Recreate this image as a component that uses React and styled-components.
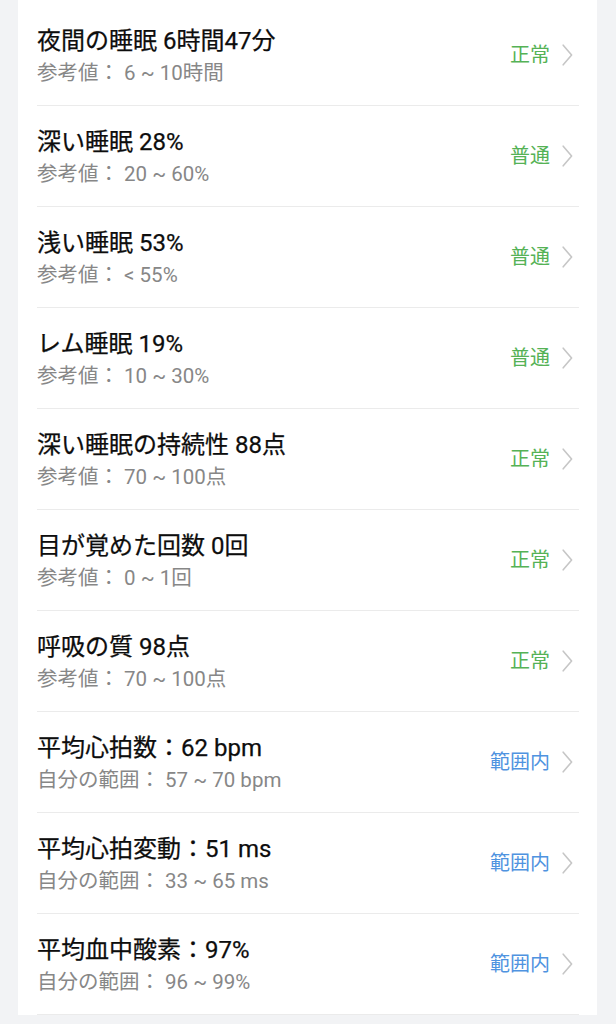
import React from 'react';
import styled, { createGlobalStyle } from 'styled-components';

const GlobalStyle = createGlobalStyle`
    html, body {
        margin: 0;
        padding: 0;
        background: #f2f3f5;
    }
    body {
        font-family: Roboto, "Noto Sans CJK JP", "Noto Sans", sans-serif;
        -webkit-font-smoothing: antialiased;
    }
`;

const Page = styled.div`
    padding: 0 19px 0 18px;
    height: 1024px;
    overflow: hidden;
`;

const Card = styled.div`
    background: #ffffff;
    padding-top: 5px;
`;

const Row = styled.div`
    display: flex;
    align-items: center;
    height: 100px;
    margin: 0 18px 0 19px;
    border-bottom: 1px solid #ebebeb;
`;

const Info = styled.div`
    flex: 1;
    display: flex;
    flex-direction: column;
    gap: 4px;
    padding-top: 1px;
`;

const Title = styled.div`
    font-size: 24px;
    line-height: 30px;
    font-weight: 400;
    color: #0d0d0d;
    white-space: pre;
    -webkit-text-stroke: 0.25px #0d0d0d;
`;

const Sub = styled.div`
    font-size: 20.5px;
    line-height: 26px;
    color: #878787;
    white-space: pre;
`;

const Status = styled.div`
    display: flex;
    align-items: center;
    gap: 12px;
    padding-right: 6px;
    font-size: 20px;
    line-height: 26px;
    color: ${(p) => (p.$tone === 'blue' ? '#4f93e0' : '#55b256')};
`;

const Chevron = () => (
    <svg width='11' height='22' viewBox='0 0 11 22'>
        <polyline
            points='1.2,1.2 9.6,11 1.2,20.8'
            fill='none'
            stroke='#c6c6c6'
            strokeWidth='1.6'
            strokeLinecap='round'
            strokeLinejoin='round'
        />
    </svg>
);

const items = [
    { title: '夜間の睡眠 6時間47分', sub: '参考値： 6 ~ 10時間', status: '正常' },
    { title: '深い睡眠 28%', sub: '参考値： 20 ~ 60%', status: '普通' },
    { title: '浅い睡眠 53%', sub: '参考値： < 55%', status: '普通' },
    { title: 'レム睡眠 19%', sub: '参考値： 10 ~ 30%', status: '普通' },
    { title: '深い睡眠の持続性 88点', sub: '参考値： 70 ~ 100点', status: '正常' },
    { title: '目が覚めた回数 0回', sub: '参考値： 0 ~ 1回', status: '正常' },
    { title: '呼吸の質 98点', sub: '参考値： 70 ~ 100点', status: '正常' },
    { title: '平均心拍数：62 bpm', sub: '自分の範囲： 57 ~ 70 bpm', status: '範囲内', tone: 'blue' },
    { title: '平均心拍変動：51 ms', sub: '自分の範囲： 33 ~ 65 ms', status: '範囲内', tone: 'blue' },
    { title: '平均血中酸素：97%', sub: '自分の範囲： 96 ~ 99%', status: '範囲内', tone: 'blue' },
];

const App = () => {
    return (
        <>
            <GlobalStyle />
            <Page>
                <Card>
                    {items.map((item) => (
                        <Row key={item.title}>
                            <Info>
                                <Title>{item.title}</Title>
                                <Sub>{item.sub}</Sub>
                            </Info>
                            <Status $tone={item.tone}>
                                {item.status}
                                <Chevron />
                            </Status>
                        </Row>
                    ))}
                </Card>
            </Page>
        </>
    );
};

export default App;
